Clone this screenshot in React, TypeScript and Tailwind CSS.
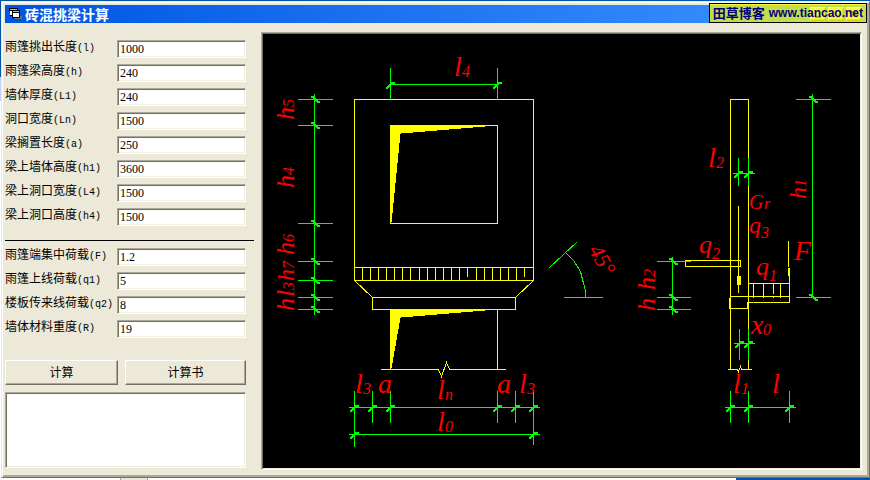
import React, { useState } from 'react';

interface Field {
  id: string;
  name: string;
  symbol: string;
  value: string;
}

const geometryFields: Field[] = [
  { id: 'l', name: '雨篷挑出长度', symbol: '(l)', value: '1000' },
  { id: 'h', name: '雨篷梁高度', symbol: '(h)', value: '240' },
  { id: 'L1', name: '墙体厚度', symbol: '(L1)', value: '240' },
  { id: 'Ln', name: '洞口宽度', symbol: '(Ln)', value: '1500' },
  { id: 'a', name: '梁搁置长度', symbol: '(a)', value: '250' },
  { id: 'h1', name: '梁上墙体高度', symbol: '(h1)', value: '3600' },
  { id: 'L4', name: '梁上洞口宽度', symbol: '(L4)', value: '1500' },
  { id: 'h4', name: '梁上洞口高度', symbol: '(h4)', value: '1500' },
];

const loadFields: Field[] = [
  { id: 'F', name: '雨篷端集中荷载', symbol: '(F)', value: '1.2' },
  { id: 'q1', name: '雨篷上线荷载', symbol: '(q1)', value: '5' },
  { id: 'q2', name: '楼板传来线荷载', symbol: '(q2)', value: '8' },
  { id: 'R', name: '墙体材料重度', symbol: '(R)', value: '19' },
];

const sunken =
  'border border-t-[#aca899] border-l-[#aca899] border-r-white border-b-white shadow-[inset_1px_1px_0_#716f64,inset_-1px_-1px_0_#f1efe2]';

const raised =
  'border border-t-white border-l-white border-r-[#716f64] border-b-[#716f64] shadow-[inset_-1px_-1px_0_#aca899]';

const FieldRow = ({ field }: { field: Field }) => {
  const [value, setValue] = useState(field.value);

  return (
    <div className="flex h-6 items-start">
      <label htmlFor={field.id} className="w-28 shrink-0 whitespace-nowrap text-xs leading-3">
        {field.name}
        <span className="font-['Liberation_Mono',monospace] text-[10px] leading-3">{field.symbol}</span>
      </label>
      <input
        id={field.id}
        value={value}
        onChange={(e) => setValue(e.target.value)}
        className={`h-[18px] min-w-0 flex-1 bg-white pl-0.5 pt-px font-['Liberation_Serif',serif] text-xs leading-3 outline-none ${sunken}`}
      />
    </div>
  );
};

// Dimension ticks: "h" sits on a horizontal dimension line, "v" on a vertical one
const Tick = ({ x, y, dir }: { x: number; y: number; dir: 'h' | 'v' }) => (
  <path
    d={
      dir === 'h'
        ? `M${x - 5} ${y + 3}h2l5 -5h2`
        : `M${x - 4} ${y - 3}h2l5 5h2`
    }
    strokeWidth={2}
  />
);

interface SymbolProps {
  x: number;
  y: number;
  main: string;
  sub?: string;
  dx?: number;
  dy?: number;
  size?: number;
  vertical?: boolean;
}

const DimText = ({ x, y, main, sub, dx = 8, dy = 1, size = 28, vertical }: SymbolProps) => (
  <g transform={vertical ? `translate(${x} ${y}) rotate(-90)` : `translate(${x} ${y})`}>
    <text fontSize={size}>{main}</text>
    {sub && (
      <text x={dx} y={dy} fontSize={16}>
        {sub}
      </text>
    )}
  </g>
);

const longTicks = [362, 370, 378, 386, 394, 402, 410, 419, 427, 435, 443, 451, 459, 476, 484, 492, 500, 508, 516];
const shortTicks = [467, 524];

const Diagram = () => (
  <svg
    viewBox="263 34 597 434"
    className="block h-full w-full bg-black"
    role="img"
    aria-label="砖混挑梁"
    fill="none"
  >
    <g stroke="#ffff00" shapeRendering="crispEdges" transform="translate(.5 .5)">
      {/* Front view */}
      <path d="M354 280V99H533V280ZM354 267H533M390 125H497V223H390Z" />
      <path d="M390 125H497L400 133L391 222Z" fill="#ffff00" stroke="none" />
      {longTicks.map((x) => (
        <path key={x} d={`M${x} 267v13M${x - 1} 276h1`} />
      ))}
      {shortTicks.map((x) => (
        <path key={x} d={`M${x} 267v9`} />
      ))}
      <path d="M354 280L372 297M533 280L515 297M372 297H515V309H372Z" />
      <path d="M390 309H497L400 317L391 368Z" fill="#ffff00" stroke="none" />
      <path d="M390 309V369M497 309V369M380 369H438L441 376L446 362L449 369H505" />
      {/* Section */}
      <path d="M730 369V99H748V369M727 369H737L738 371L740 366L741 369H751" />
      <path d="M738 205V292M685 260H740V266H685Z" />
      <path d="M737 276h3v8h-3z" fill="#ffff00" />
      <path d="M788 240V266M789 267V301M788 267V275" />
      <path d="M748 283H789M753 283V297M763 283V297M773 283V293M773 296V297M780 283V297M752 293h1M762 293h1M772 293h1" />
      <path d="M789 296H730V308H747V302H789" />
      <path d="M729 297V308M747 303V308" />
    </g>

    <g stroke="#00ff00" shapeRendering="crispEdges" transform="translate(.5 .5)">
      <path d="M314 93V314M390 84H497M390 67V99M497 67V99" />
      {[99, 125, 223, 261, 280, 297, 309].map((y) => (
        <g key={y}>
          <path d={`M297 ${y}H332`} />
          <Tick x={314} y={y} dir="v" />
        </g>
      ))}
      <Tick x={390} y={84} dir="h" />
      <Tick x={497} y={84} dir="h" />

      <path d="M348 407H539M348 434H539M354 390V446M533 390V444" />
      <path d="M372 390V422M390 390V422M497 390V422M515 390V422" />
      {[354, 372, 390, 497, 515, 533].map((x) => (
        <Tick key={x} x={x} y={407} dir="h" />
      ))}
      <Tick x={354} y={434} dir="h" />
      <Tick x={533} y={434} dir="h" />

      <path d="M549 267L577 241M566 253L573 260L580 271L583 283L585 290V297M563 297H602" />

      <path d="M732 173H754M738 157V185M748 157V185" />
      <Tick x={738} y={173} dir="h" />
      <Tick x={748} y={173} dir="h" />
      <path d="M812 93V297M795 99H830M795 297H830" />
      <Tick x={812} y={99} dir="v" />
      <Tick x={812} y={297} dir="v" />
      <path d="M672 256V314M656 261H690M656 297H690M656 309H690" />
      <Tick x={672} y={261} dir="v" />
      <Tick x={672} y={297} dir="v" />
      <Tick x={672} y={309} dir="v" />
      <path d="M733 343H754M739 328V359M748 328V359" />
      <Tick x={739} y={343} dir="h" />
      <Tick x={748} y={343} dir="h" />
      <path d="M724 407H795M730 390V422M748 390V422M789 390V422" />
      <Tick x={730} y={407} dir="h" />
      <Tick x={748} y={407} dir="h" />
      <Tick x={789} y={407} dir="h" />
    </g>

    <g fill="#ff0000" className="font-['Liberation_Serif',serif] italic">
      <DimText x={454} y={76} main="l" sub="4" />
      <DimText x={294} y={120} main="h" sub="5" size={26} dx={13} dy={0} vertical />
      <DimText x={294} y={188} main="h" sub="4" size={26} dx={13} dy={0} vertical />
      <DimText x={294} y={255} main="h" sub="6" size={26} dx={13} dy={0} vertical />
      <DimText x={294} y={281} main="h" sub="7" size={24} dx={12} dy={0} vertical />
      <DimText x={294} y={297} main="l" sub="3" size={26} dx={7} dy={0} vertical />
      <DimText x={294} y={311} main="h" size={26} vertical />

      <DimText x={355} y={393} main="l" sub="3" />
      <DimText x={378} y={393} main="a" />
      <DimText x={437} y={399} main="l" sub="n" />
      <DimText x={437} y={431} main="l" sub="0" />
      <DimText x={497} y={393} main="a" />
      <DimText x={519} y={393} main="l" sub="3" />

      <text transform="translate(588 250) rotate(60)" fontSize={22}>
        45°
      </text>

      <DimText x={708} y={167} main="l" sub="2" />
      <DimText x={749} y={209} main="G" sub="r" size={20} dx={15} dy={0} />
      <DimText x={749} y={233} main="q" sub="3" size={24} dx={12} dy={5} />
      <DimText x={699} y={253} main="q" sub="2" size={26} dx={13} dy={6} />
      <DimText x={756} y={275} main="q" sub="1" size={26} dx={13} dy={6} />
      <DimText x={794} y={260} main="F" />
      <DimText x={806} y={199} main="h" sub="1" size={24} dx={12} dy={0} vertical />
      <DimText x={655} y={290} main="h" sub="2" size={26} dx={13} dy={0} vertical />
      <DimText x={655} y={311} main="h" size={26} vertical />
      <DimText x={751} y={334} main="x" sub="0" dx={12} />
      <DimText x={733} y={393} main="l" sub="1" />
      <DimText x={772} y={393} main="l" />
    </g>
  </svg>
);

const TitleBar = () => (
  <header className="relative flex h-[18px] items-center bg-linear-to-r from-[#0054e3] to-[#3d95ff] px-1">
    <svg width="14" height="12" viewBox="0 0 14 12" shapeRendering="crispEdges" aria-hidden="true">
      <path d="M2 9h2v1H2zM11 8h2v3H6v-1h5z" fill="#716f64" />
      <path d="M0 0h9v2h2v8H3V8H1V3H0z" fill="#000" />
      <path d="M1 3h2v4H1zM4 5h6v4H4z" fill="#fff" />
      <path d="M1 1h7v1H1zM4 3h6v1H4z" fill="#00ffff" />
    </svg>
    <h1 className="ml-0.5 flex-1 text-sm font-bold leading-4 text-white">砖混挑梁计算</h1>
    <div className="flex gap-0.5">
      <button aria-label="最小化" className={`flex h-3.5 w-4 items-end justify-center bg-[#ece9d8] ${raised}`}>
        <span className="mb-0.5 h-0.5 w-1.5 bg-black" />
      </button>
      <button aria-label="最大化" className={`flex h-3.5 w-4 items-center justify-center bg-[#ece9d8] ${raised}`}>
        <span className="size-2 border border-t-2 border-[#aca899]" />
      </button>
      <button aria-label="关闭" className={`flex h-3.5 w-4 items-center justify-center bg-[#ece9d8] ${raised}`}>
        <svg width="8" height="8" viewBox="0 0 8 8" stroke="#000" strokeWidth="1.5" aria-hidden="true">
          <path d="M1 1l6 6M7 1l-6 6" />
        </svg>
      </button>
    </div>
    <a
      href="#"
      className="absolute -right-px -top-0.5 flex h-5 items-center gap-1 whitespace-nowrap border border-black bg-[#ffff00]/70 px-[3px] text-[13px] font-bold text-[#000080]"
    >
      <span>田草博客</span>
      <span className="font-['Liberation_Sans',sans-serif] text-xs">www.tiancao.net</span>
    </a>
  </header>
);

export default function App() {
  return (
    <div className="min-h-screen bg-white font-['Noto_Sans_CJK_SC',sans-serif] text-black">
      <div className="flex border-t border-[#0055a5]">
        <div className="flex w-px flex-col">
          <div className="h-19 bg-[#0055a5]" />
          <div className="h-6 bg-[#c6d3f7]" />
        </div>
        <main className="min-w-0 flex-1 border border-t-[#ece9d8] border-l-[#ece9d8] border-r-[#716f64] border-b-[#716f64] bg-[#ece9d8] p-[3px] shadow-[inset_1px_1px_0_#ffffff,inset_-2px_-2px_0_#aca899]">
          <TitleBar />
          <div className="flex gap-[15px] pb-1 pr-1 pt-[9px]">
            <form className="flex w-[241px] shrink-0 flex-col pt-2" onSubmit={(e) => e.preventDefault()}>
              {geometryFields.map((f) => (
                <FieldRow key={f.id} field={f} />
              ))}
              <hr className="-mr-2 mb-[7px] mt-2 border-black" />
              {loadFields.map((f) => (
                <FieldRow key={f.id} field={f} />
              ))}
              <div className="mt-4 flex gap-[7px]">
                <button className={`h-[25px] w-[113px] bg-[#ece9d8] pb-0.5 text-xs ${raised}`}>计算</button>
                <button className={`h-[25px] flex-1 bg-[#ece9d8] pb-0.5 text-xs ${raised}`}>计算书</button>
              </div>
              <textarea
                aria-label="计算结果"
                className={`mt-[7px] h-[76px] w-full resize-none bg-white p-1 text-xs outline-none ${sunken}`}
              />
            </form>
            <section className={`min-w-0 flex-1 bg-black p-px ${sunken}`}>
              <Diagram />
            </section>
          </div>
        </main>
      </div>
      <div className="flex h-0.5">
        <div className="ml-30 w-7 border-x border-[#aca899] bg-[#ece9d8]" />
        <div className="ml-auto w-[134px] bg-[#0055a5]" />
      </div>
    </div>
  );
}
